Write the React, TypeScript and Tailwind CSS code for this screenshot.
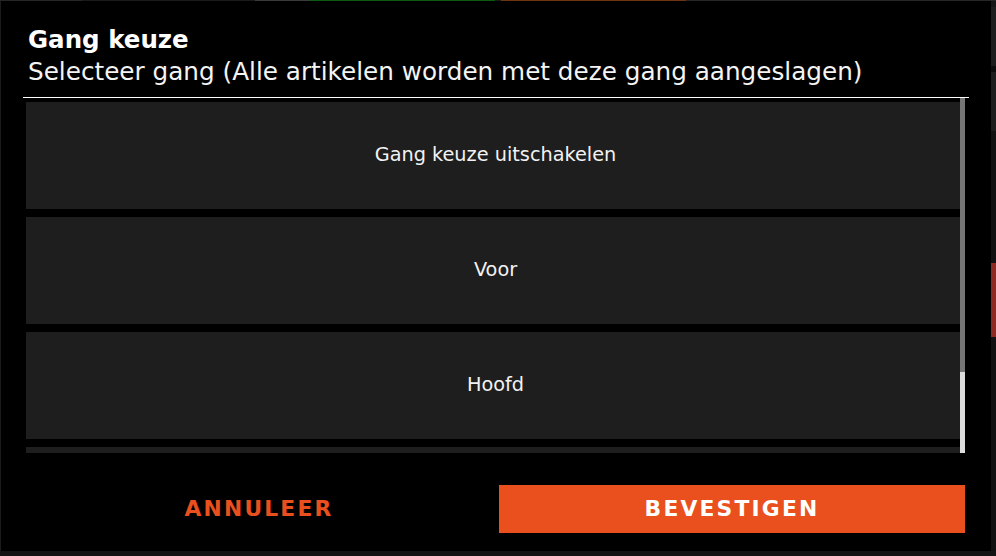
const items = ["Gang keuze uitschakelen", "Voor", "Hoofd", ""];

export default function App() {
  return (
    <div
      className="w-[996px] h-[556px] flex flex-col bg-[#121212] overflow-hidden"
      style={{ fontFamily: '"DejaVu Sans", Verdana, sans-serif' }}
    >
      {/* page behind the dialog, only the edges show */}
      <div className="h-[1px] flex shrink-0">
        <div className="w-[82px] bg-[#262626]" />
        <div className="w-[173px] bg-[#1a1a1a]" />
        <div className="w-[54px] bg-[#3a3a3a]" />
        <div className="w-[186px] bg-[#0b5c10]" />
        <div className="w-[6px] bg-[#1a1a1a]" />
        <div className="w-[185px] bg-[#6e3512]" />
        <div className="flex-1 bg-[#262626]" />
      </div>

      <div className="flex flex-1 min-h-0">
        <div className="w-[1px] bg-[#1c1c1c]" />

        <div className="w-[990px] bg-black flex flex-col">
          <div className="pl-[27px] pt-[24px]">
            <h2 className="text-[24.5px] leading-[29px] font-bold text-white">
              Gang keuze
            </h2>
            <p className="mt-[3px] text-[24.7px] leading-[29px] text-[#f4f4f4] whitespace-nowrap">
              Selecteer gang (Alle artikelen worden met deze gang aangeslagen)
            </p>
          </div>

          <div className="ml-[22px] mr-[22px] mt-[11px] h-[1px] bg-white" />

          <div className="relative ml-[22px] mr-[26px] h-[355px] overflow-hidden">
            <div className="h-full pl-[3px] pt-[4px] flex flex-col gap-[8px]">
              {items.map((label, i) => (
                <div
                  key={i}
                  className="h-[107px] shrink-0 bg-[#1e1e1e] flex items-center justify-center text-[19.3px] text-[#f2f2f2]"
                >
                  {label}
                </div>
              ))}
            </div>
            {/* scrollbar */}
            <div className="absolute right-0 top-0 bottom-0 w-[5px] flex flex-col">
              <div className="h-[274px] bg-[#767676]" />
              <div className="flex-1 bg-[#dcdcdc]" />
            </div>
          </div>

          <div className="flex gap-[7px] pl-[25px] pr-[26px] mt-[32px]">
            <button className="flex-1 h-[48px] flex items-center justify-center text-[21.8px] font-bold tracking-[0.1em] text-[#e9501e] whitespace-nowrap">
              ANNULEER
            </button>
            <button className="flex-1 h-[48px] flex items-center justify-center bg-[#e9501e] text-[21.8px] font-bold tracking-[0.1em] text-white whitespace-nowrap">
              BEVESTIGEN
            </button>
          </div>
        </div>

        <div className="flex-1 flex flex-col">
          <div className="h-[6px] bg-[#161616]" />
          <div className="h-[59px] bg-[#1d1d1d]" />
          <div className="h-[6px] bg-[#0c0c0c]" />
          <div className="h-[59px] bg-[#1d1d1d]" />
          <div className="h-[132px] bg-[#111111]" />
          <div className="h-[74px] bg-[#8e2a22]" />
          <div className="flex-1 bg-[#111111]" />
        </div>
      </div>

      <div className="h-[5px] shrink-0 bg-[#141414]" />
    </div>
  );
}
